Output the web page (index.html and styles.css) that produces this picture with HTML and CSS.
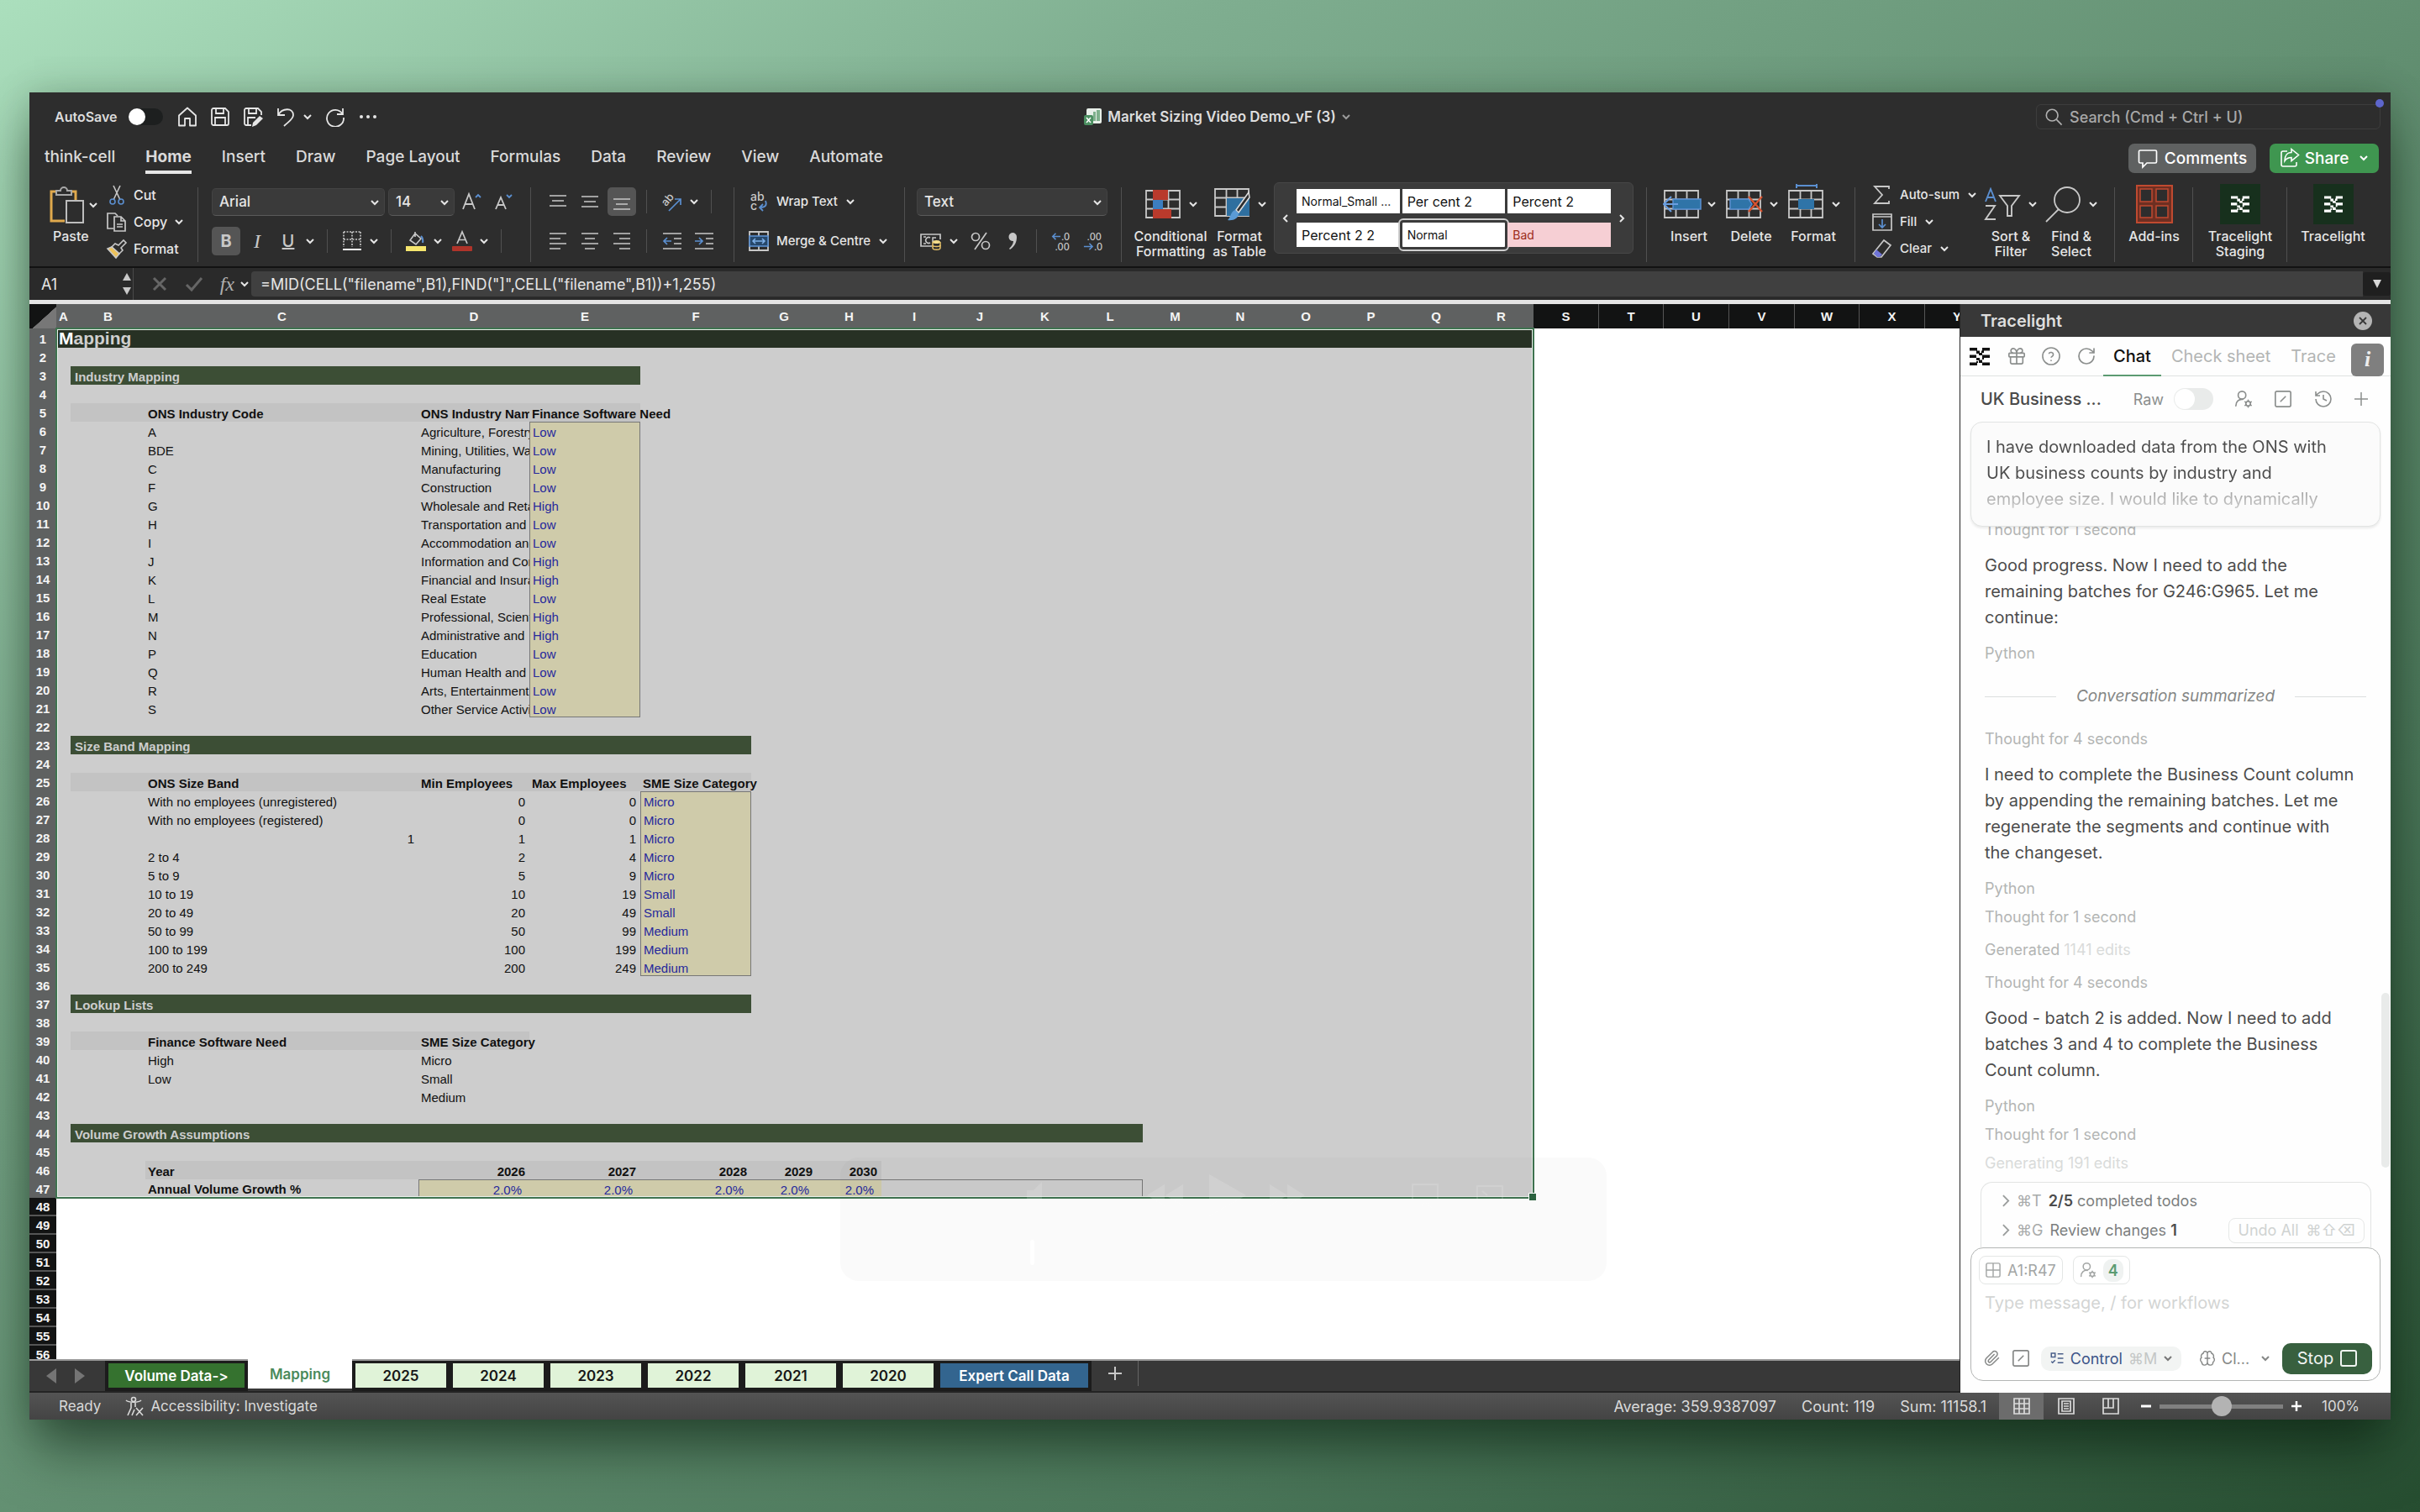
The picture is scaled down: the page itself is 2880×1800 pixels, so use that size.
FILE: index.html
```html
<!DOCTYPE html>
<html lang="en">
<head>
<meta charset="utf-8">
<title>Market Sizing Video Demo_vF (3)</title>
<link rel="stylesheet" href="styles.css">
</head>
<body>
<svg class="sprite" aria-hidden="true">
  <symbol id="chev" viewBox="0 0 12 12"><path d="M2 4l4 4 4-4" fill="none" stroke="currentColor" stroke-width="2"/></symbol>
  <symbol id="home" viewBox="0 0 24 24"><path d="M2 10.500L12 1.500l10 9V22.500h-7V14H9v8.500H2z" fill="none" stroke="currentColor" stroke-width="1.800" stroke-linejoin="round"/></symbol>
  <symbol id="save" viewBox="0 0 24 24"><path d="M2 4a2 2 0 0 1 2-2h14l4 4v14a2 2 0 0 1-2 2H4a2 2 0 0 1-2-2zM7 2v6h9V2M6 22v-9h12v9" fill="none" stroke="currentColor" stroke-width="1.800"/></symbol>
  <symbol id="saveas" viewBox="0 0 24 24"><path d="M10 22H4a2 2 0 0 1-2-2V4a2 2 0 0 1 2-2h14l4 4v4M7 2v6h9V2M6 22v-9h9" fill="none" stroke="currentColor" stroke-width="1.800"/><path d="M20 11l4 3-8 8-5 2 1-5z" fill="currentColor"/></symbol>
  <symbol id="undo" viewBox="0 0 24 24"><path d="M3 2v8h8M3 10C8 1 21 1 21 10c0 5-6 8-11 13" fill="none" stroke="currentColor" stroke-width="1.800"/></symbol>
  <symbol id="redo" viewBox="0 0 24 24"><path d="M21 2v7h-7M20.500 8.500A10 10 0 1 0 22 13" fill="none" stroke="currentColor" stroke-width="1.800"/></symbol>
  <symbol id="search" viewBox="0 0 24 24"><circle cx="10" cy="10" r="7.500" fill="none" stroke="currentColor" stroke-width="1.800"/><path d="M15.500 15.500l7 7" stroke="currentColor" stroke-width="1.800"/></symbol>
  <symbol id="grid-user" viewBox="0 0 24 24"><g fill="none" stroke="currentColor" stroke-width="1.800" stroke-linecap="round"><circle cx="10" cy="7" r="5"/><path d="M2 21c0-6 4-9 9-8.500"/><circle cx="18" cy="18" r="3"/><path d="M18 13.500v1.500M18 21v1.500M14 15.700l1.400.8M20.600 19.500l1.400.8M14 20.300l1.400-.8M20.600 16.500l1.400-.8"/></g></symbol>
  <symbol id="slash" viewBox="0 0 24 24"><g fill="none" stroke="currentColor" stroke-width="1.800" stroke-linecap="round"><rect x="2" y="2" width="20" height="20" rx="2"/><path d="M9 15l6-6"/></g></symbol>
  <symbol id="rotate" viewBox="0 0 24 24"><path d="M21 12a9 9 0 1 1-9-9c2.520 0 4.930 1 6.740 2.740L21 8M21 3v5h-5" fill="none" stroke="currentColor" stroke-width="1.700" stroke-linecap="round"/></symbol>
  <symbol id="logo" viewBox="0 0 24 21"><path d="M0 0h9v3.500H0zM15 0h9v3.500h-9zM8 3.500h4V7H8zM14 3.500h3V6h-3zM11 6h4v3h-4zM0 8.500h8V12H0zM15 8.500h9V12h-9zM8 12h4v3H8zM15 12h2v2h-2zM11 14.500h4V18h-4zM0 17.500h9V21H0zM15 17.500h9V21h-9zM8 16h2v2H8z" fill="currentColor"/></symbol>
  <symbol id="gridbase" viewBox="0 0 44 36"><path d="M2 2h40v32H2zM2 12.500h40M2 23.500h40M15.500 2v32M28.500 2v32" fill="none" stroke="#c8c8c8" stroke-width="1.800"/></symbol>
</svg>

<main class="window">
  <header class="titlebar">
    <div class="quick">
      <label class="autosave">AutoSave <input type="checkbox" class="switch switch-dark"></label>
      <button class="tb" aria-label="Home"><svg class="i24"><use href="#home"/></svg></button>
      <button class="tb" aria-label="Save"><svg class="i24"><use href="#save"/></svg></button>
      <button class="tb" aria-label="Save as"><svg class="i24"><use href="#saveas"/></svg></button>
      <button class="tb undo" aria-label="Undo"><svg class="i24"><use href="#undo"/></svg><svg class="chev"><use href="#chev"/></svg></button>
      <button class="tb" aria-label="Redo"><svg class="i24"><use href="#redo"/></svg></button>
      <button class="tb" aria-label="More"><svg class="i24" viewBox="0 0 24 24" fill="currentColor"><circle cx="4" cy="12" r="2"/><circle cx="12" cy="12" r="2"/><circle cx="20" cy="12" r="2"/></svg></button>
    </div>
    <div class="doc">
      <svg class="docicon" viewBox="0 0 22 22"><rect x="3" y="1" width="18" height="18" rx="2" fill="#e8efe9"/><path d="M11 5h3v11h-3zM15 3h4v13h-4z" fill="#7fb08c"/><rect x="0" y="9" width="11" height="12" rx="2" fill="#4b8f61"/><path d="M3 12l5 6M8 12l-5 6" stroke="#fff" stroke-width="1.500"/></svg>
      <span>Market Sizing Video Demo_vF (3)</span><svg class="chev dim"><use href="#chev"/></svg>
    </div>
    <label class="search"><svg class="i22"><use href="#search"/></svg><input type="text" placeholder="Search (Cmd + Ctrl + U)" aria-label="Search"><i class="bluedot"></i></label>
  </header>

  <nav class="tabs">
    <a href="#">think-cell</a><a href="#" class="on">Home</a><a href="#">Insert</a><a href="#">Draw</a><a href="#">Page Layout</a><a href="#">Formulas</a><a href="#">Data</a><a href="#">Review</a><a href="#">View</a><a href="#">Automate</a>
    <div class="tabs-right">
      <button class="comments"><svg class="i24" viewBox="0 0 24 24"><path d="M3 3h18a1.500 1.500 0 0 1 1.500 1.500v12A1.500 1.500 0 0 1 21 18H11l-5 5v-5H3a1.500 1.500 0 0 1-1.500-1.500v-12A1.500 1.500 0 0 1 3 3z" fill="none" stroke="currentColor" stroke-width="1.700"/></svg>Comments</button>
      <button class="share"><svg class="i24" viewBox="0 0 24 24"><path d="M9 4H4a2 2 0 0 0-2 2v14a2 2 0 0 0 2 2h14a2 2 0 0 0 2-2v-3M14 1.500l8.500 7-8.500 7v-4c-4 0-6 1-8 4 0-6 3-10 8-10z" fill="none" stroke="currentColor" stroke-width="1.600"/></svg>Share<svg class="chev"><use href="#chev"/></svg></button>
    </div>
  </nav>

  <section class="ribbon">
    <div class="group g-clip">
      <button class="paste"><span class="pic"><svg width="42" height="44" viewBox="0 0 42 44"><path d="M9 6H2v35h16" fill="none" stroke="#e0a94d" stroke-width="3"/><path d="M24 6h7v10" fill="none" stroke="#e0a94d" stroke-width="3"/><path d="M8 10V5h5a4 4 0 0 1 8 0h5v5z" fill="#2d2d2d" stroke="#a8a8a8" stroke-width="2"/><rect x="20" y="17" width="20" height="26" fill="#2d2d2d" stroke="#bdbdbd" stroke-width="2"/></svg><svg class="chev"><use href="#chev"/></svg></span>Paste</button>
      <div class="stack">
        <button><svg class="i24" viewBox="0 0 24 24" fill="none" stroke-width="1.600"><path d="M8 1l8 17M16 1L8 18" stroke="#c8c8c8"/><circle cx="7" cy="20" r="3" stroke="#5b8fd0"/><circle cx="17" cy="20" r="3" stroke="#5b8fd0"/></svg>Cut</button>
        <button><svg class="i24" viewBox="0 0 24 24" fill="none" stroke="#c8c8c8" stroke-width="1.700"><path d="M8 20H1V2h9l3 3"/><path d="M9 6h8l5 5v12H9zM17 6v5h5M12 15h7M12 18h7"/></svg>Copy<svg class="chev"><use href="#chev"/></svg></button>
        <button><svg class="i24" viewBox="0 0 24 24" stroke-width="1.600"><path d="M14 8l6-6 3 3-6 6 2 3-4 4-9-8 4-4z" fill="none" stroke="#c8c8c8"/><path d="M6 10l9 8-4 5L1 12z" fill="#edc25a" stroke="#c8c8c8"/></svg>Format</button>
      </div>
    </div>

    <div class="group rows g-font">
      <div class="row">
        <span class="sel w205"><select aria-label="Font"><option>Arial</option></select><svg class="chev"><use href="#chev"/></svg></span>
        <span class="sel w78"><select aria-label="Font size"><option>14</option></select><svg class="chev"><use href="#chev"/></svg></span>
        <button class="gl" aria-label="Grow font"><svg width="24" height="24" viewBox="0 0 24 24" fill="none"><path d="M1 21L8 3l7 18M3.500 15h9" stroke="#c8c8c8" stroke-width="1.800"/><path d="M16 7l3-3 3 3" stroke="#5b8fd0" stroke-width="1.800"/></svg></button>
        <button class="gl" aria-label="Shrink font"><svg width="24" height="24" viewBox="0 0 24 24" fill="none"><path d="M3 21L9 7l6 14M5 16h8" stroke="#c8c8c8" stroke-width="1.800"/><path d="M16 4l3 3 3-3" stroke="#5b8fd0" stroke-width="1.800"/></svg></button>
      </div>
      <div class="row tight">
        <button class="sq on"><b>B</b></button><button class="sq"><i class="serif">I</i></button><button class="sq"><u>U</u></button><svg class="chev"><use href="#chev"/></svg>
        <i class="sep"></i>
        <svg class="i24" viewBox="0 0 24 24" fill="none" stroke="#c8c8c8"><path d="M2 1v18M12 1v18M22 1v18M2 1h20M2 10h20" stroke-width="1.600" stroke-dasharray="2 1.500"/><path d="M1 22h22" stroke="#fff" stroke-width="2"/></svg><svg class="chev"><use href="#chev"/></svg>
        <i class="sep"></i>
        <svg class="i24" viewBox="0 0 24 24" fill="none"><path d="M11 1v6M11 3L5 11l7 5 6-7z" stroke="#c8c8c8" stroke-width="1.600"/><path d="M18 6q3 3 2 8" stroke="#5b8fd0" stroke-width="2"/><rect x="0" y="18" width="24" height="6" fill="#f6e66e"/></svg><svg class="chev"><use href="#chev"/></svg>
        <svg class="i24" viewBox="0 0 24 24" fill="none"><path d="M6 15l6-14 6 14M8 10.500h8" stroke="#c8c8c8" stroke-width="1.700"/><rect x="0" y="18" width="24" height="6" rx="1" fill="#b0342a"/></svg><svg class="chev"><use href="#chev"/></svg>
        <i class="sep"></i>
      </div>
    </div>

    <div class="group rows g-align">
      <div class="row al">
        <button class="sq" aria-label="Top"><svg class="i22" viewBox="0 0 22 22" stroke="currentColor" stroke-width="1.700"><path d="M1 4h20M4 10h14M1 16h20"/></svg></button>
        <button class="sq" aria-label="Middle"><svg class="i22" viewBox="0 0 22 22" stroke="currentColor" stroke-width="1.700"><path d="M1 5h20M4 11h14M1 17h20"/></svg></button>
        <button class="sq on" aria-label="Bottom"><svg class="i22" viewBox="0 0 22 22" stroke="currentColor" stroke-width="1.700"><path d="M1 8h20M4 14h14M1 20h20"/></svg></button>
        <i class="sep"></i>
        <svg class="i24" viewBox="0 0 24 24" fill="none"><text x="0" y="14" font-size="13" fill="#c8c8c8" transform="rotate(-50 7 11)">ab</text><path d="M8 23L22 9M15 9h7v7" stroke="#5b8fd0" stroke-width="1.700"/></svg><svg class="chev"><use href="#chev"/></svg>
        <i class="sep"></i>
      </div>
      <div class="row al">
        <button class="sq" aria-label="Left"><svg class="i22" viewBox="0 0 22 22" stroke="currentColor" stroke-width="1.700"><path d="M1 2h20M1 8h13M1 14h20M1 20h13"/></svg></button>
        <button class="sq" aria-label="Centre"><svg class="i22" viewBox="0 0 22 22" stroke="currentColor" stroke-width="1.700"><path d="M1 2h20M5 8h12M1 14h20M5 20h12"/></svg></button>
        <button class="sq" aria-label="Right"><svg class="i22" viewBox="0 0 22 22" stroke="currentColor" stroke-width="1.700"><path d="M1 2h20M8 8h13M1 14h20M8 20h13"/></svg></button>
        <i class="sep"></i>
        <svg class="i24" viewBox="0 0 24 24" fill="none" stroke-width="1.700"><path d="M1 3h22M14 9h9M14 15h9M1 21h22" stroke="#c8c8c8"/><path d="M11 12H2M6 8l-4 4 4 4" stroke="#5b8fd0"/></svg>
        <svg class="i24 ml" viewBox="0 0 24 24" fill="none" stroke-width="1.700"><path d="M1 3h22M14 9h9M14 15h9M1 21h22" stroke="#c8c8c8"/><path d="M1 12h9M6 8l4 4-4 4" stroke="#5b8fd0"/></svg>
      </div>
    </div>

    <div class="group rows g-wrap">
      <button class="row txt"><svg class="i24" viewBox="0 0 24 24" fill="none"><text x="2" y="11" font-size="14" fill="#c8c8c8">ab</text><text x="2" y="22" font-size="14" fill="#c8c8c8">c</text><path d="M20 11c2 5 0 8-6 8M17 15l-4 4 4 4" stroke="#5b8fd0" stroke-width="1.800"/></svg>Wrap Text<svg class="chev"><use href="#chev"/></svg></button>
      <button class="row txt"><svg class="i24" viewBox="0 0 24 24" fill="none"><path d="M1 1h22v22H1zM12 1v5M12 18v5" stroke="#c8c8c8" stroke-width="1.800"/><rect x="1" y="6" width="22" height="12" fill="#27486b" stroke="#5b8fd0" stroke-width="1.600"/><path d="M5 12h14M8 9l-3 3 3 3M16 9l3 3-3 3" stroke="#7fb0e8" stroke-width="1.500"/></svg>Merge &amp; Centre<svg class="chev"><use href="#chev"/></svg></button>
    </div>

    <div class="group rows g-num">
      <div class="row"><span class="sel w226"><select aria-label="Number format"><option>Text</option></select><svg class="chev"><use href="#chev"/></svg></span></div>
      <div class="row num">
        <svg class="i26" viewBox="0 0 26 24" fill="none"><path d="M14 18H1V4h23v6M4 7h3M4 15h3" stroke="#c8c8c8" stroke-width="1.700"/><path d="M12 8a3.500 3.500 0 1 0 0 6M19 8h-4v5" stroke="#c8c8c8" stroke-width="1.500"/><path d="M15 13v7c0 3 9 3 9 0v-7" fill="#2d2d2d" stroke="#e9c46a" stroke-width="1.500"/><ellipse cx="19.500" cy="13" rx="4.500" ry="2" fill="#f4dc8a"/><path d="M15 17c0 2 9 2 9 0" stroke="#e9c46a" stroke-width="1.500"/></svg><svg class="chev"><use href="#chev"/></svg>
        <svg class="i24 pctic" viewBox="0 0 24 24" fill="none" stroke="#c8c8c8" stroke-width="1.700"><circle cx="6" cy="7" r="4.500"/><circle cx="18" cy="17" r="4.500"/><path d="M19 2L5 22"/></svg>
        <svg class="i24" viewBox="0 0 24 24"><path d="M11 2a5 5 0 0 1 5 5c0 6-2 11-8 15l-1-1c3-3 5-6 5-9a5 5 0 1 1-1-10z" fill="#c8c8c8"/></svg>
        <i class="sep"></i>
        <svg class="i24" viewBox="0 0 24 26"><text x="13" y="12" font-size="12" fill="#c8c8c8">.0</text><text x="5" y="25" font-size="12" fill="#c8c8c8">.00</text><path d="M12 7H2M6 3L2 7l4 4" fill="none" stroke="#5b8fd0" stroke-width="1.700"/></svg>
        <svg class="i24" viewBox="0 0 24 26"><text x="4" y="12" font-size="12" fill="#c8c8c8">.00</text><text x="13" y="25" font-size="12" fill="#c8c8c8">.0</text><path d="M0 20h11M7 16l4 4-4 4" fill="none" stroke="#5b8fd0" stroke-width="1.700"/></svg>
      </div>
    </div>

    <div class="group g-style">
      <button class="big w82"><span class="pic"><svg width="44" height="36" viewBox="0 0 44 36"><use href="#gridbase"/><path d="M10 1h18v12H10zM10 24h22v11H10z" fill="#b93a2c"/><path d="M10 13h12v11H10z" fill="#3c7ec0"/></svg><svg class="chev"><use href="#chev"/></svg></span>Conditional<br>Formatting</button>
      <button class="big w82"><span class="pic"><svg width="44" height="40" viewBox="0 0 44 40"><use href="#gridbase" height="36"/><path d="M16 13h27v21H16z" fill="#2f6f9f"/><path d="M42 6L27 27l3 3L43 12z" fill="#2d2d2d" stroke="#ddd" stroke-width="1.500"/><path d="M26 27l4 4c0 6-6 9-13 8 4-3 3-10 9-12z" fill="#5b9bd5"/></svg><svg class="chev"><use href="#chev"/></svg></span>Format<br>as Table</button>
      <div class="gallery">
        <button class="arrow" aria-label="Previous styles"><svg class="chev left"><use href="#chev"/></svg></button>
        <div class="cells">
          <button class="small">Normal_Small ...</button><button>Per cent 2</button><button>Percent 2</button>
          <button>Percent 2 2</button><button class="small picked">Normal</button><button class="bad small">Bad</button>
        </div>
        <button class="arrow" aria-label="Next styles"><svg class="chev right"><use href="#chev"/></svg></button>
      </div>
    </div>

    <div class="group g-cells">
      <button class="big w66"><span class="pic"><svg width="46" height="36" viewBox="0 0 46 36"><use href="#gridbase" width="44"/><path d="M12 12h33v12H12z" fill="#2f74a8" stroke="#5b8fd0" stroke-width="1.500"/><path d="M18 18H1M10 9l-9 9 9 9" fill="none" stroke="#6a9ee0" stroke-width="2"/></svg><svg class="chev"><use href="#chev"/></svg></span>Insert</button>
      <button class="big w66"><span class="pic"><svg width="46" height="36" viewBox="0 0 46 36"><use href="#gridbase" width="44"/><path d="M6 12h22l4 6-4 6H6z" fill="#2f74a8" stroke="#5b8fd0" stroke-width="1.500"/><path d="M28 9l16 18M44 9L28 27" fill="none" stroke="#d8532f" stroke-width="2.200"/></svg><svg class="chev"><use href="#chev"/></svg></span>Delete</button>
      <button class="big w66"><span class="pic"><svg width="46" height="48" viewBox="0 0 46 48"><svg y="6" width="44" height="36"><use href="#gridbase"/></svg><path d="M13 18h19v12H13z" fill="#2f74a8"/><path d="M11 2h24M11 0v5M35 0v5" stroke="#5b8fd0" stroke-width="2"/></svg><svg class="chev"><use href="#chev"/></svg></span>Format</button>
    </div>

    <div class="group g-edit">
      <div class="stack">
        <button><svg class="i24" viewBox="0 0 24 24" fill="none" stroke="#c8c8c8" stroke-width="1.800"><path d="M20 5V2H3l9 10-9 10h17v-3"/></svg>Auto-sum<svg class="chev"><use href="#chev"/></svg></button>
        <button><svg class="i24" viewBox="0 0 24 24" fill="none"><path d="M1 3h22v19H1zM1 6h22" stroke="#c8c8c8" stroke-width="1.700"/><path d="M12 9v10M8 15l4 4 4-4" stroke="#5b8fd0" stroke-width="1.700"/></svg>Fill<svg class="chev"><use href="#chev"/></svg></button>
        <button><svg class="i24" viewBox="0 0 24 24" fill="none"><path d="M14 2l8 6-11 14H6l-5-4z" stroke="#c8c8c8" stroke-width="1.700"/><path d="M5 13l7 6-3 3H6l-4-4z" fill="#6f74d8"/></svg>Clear<svg class="chev"><use href="#chev"/></svg></button>
      </div>
      <button class="big w72"><span class="pic"><svg width="44" height="40" viewBox="0 0 44 40" fill="none" stroke-width="1.900"><path d="M2 17L8 2l6 15M4 12h8" stroke="#5b8fd0"/><path d="M2 22h11L2 38h12M19 10h23L33 22v12h-5V22z" stroke="#c8c8c8"/></svg><svg class="chev"><use href="#chev"/></svg></span>Sort &amp;<br>Filter</button>
      <button class="big w72"><span class="pic"><svg width="44" height="44" viewBox="0 0 44 44" fill="none" stroke="#c8c8c8" stroke-width="1.800"><circle cx="27" cy="17" r="15"/><path d="M17 28L2 43"/></svg><svg class="chev"><use href="#chev"/></svg></span>Find &amp;<br>Select</button>
    </div>

    <div class="group solo w93"><button class="big"><span class="pic"><svg width="44" height="46" viewBox="0 0 44 46" fill="#2d2d2d" stroke="#c04a30"><rect x="1" y="1" width="42" height="44" fill="#6e2f22" stroke-width="2"/><path d="M5 5h14v15H5zM24 5h14v15H24zM5 25h14v14H5zM24 25h14v14H24z" stroke-width="1.500"/></svg></span>Add-ins</button></div>
    <div class="group solo w112"><button class="big"><span class="pic"><span class="tile"><svg width="22" height="20"><use href="#logo"/></svg></span></span>Tracelight<br>Staging</button></div>
    <div class="group solo w123"><button class="big"><span class="pic"><span class="tile"><svg width="22" height="20"><use href="#logo"/></svg></span></span>Tracelight</button></div>
  </section>

  <section class="formula">
    <div class="namebox"><input value="A1" aria-label="Name box"><svg width="12" height="28" viewBox="0 0 12 28" fill="#c8c8c8"><path d="M6 1l5 9H1zM6 27l5-9H1z"/></svg></div>
    <div class="fx">
      <svg class="i22" viewBox="0 0 22 22" stroke="#666" stroke-width="3"><path d="M4 4l14 14M18 4L4 18"/></svg>
      <svg class="i22" viewBox="0 0 22 22" fill="none" stroke="#666" stroke-width="3"><path d="M2 12l6 6L20 4"/></svg>
      <span><i>fx</i><svg class="chev"><use href="#chev"/></svg></span>
    </div>
    <input class="fin" value="=MID(CELL(&quot;filename&quot;,B1),FIND(&quot;]&quot;,CELL(&quot;filename&quot;,B1))+1,255)" aria-label="Formula">
    <button class="fdrop" aria-label="Expand"><svg width="12" height="12" viewBox="0 0 12 12" fill="#d8d8d8"><path d="M1 1h10L6 11z"/></svg></button>
  </section>

  <section class="work">
    <div class="book">
      <div class="sheet">
        <table>
          <colgroup><col class="c-h"><col class="c-a"><col class="c-b"><col class="c-c"><col class="c-d"><col class="c-d"><col class="c-d"><col class="c78"><col class="c77"><col class="c78"><col class="c78"><col class="c77"><col class="c78"><col class="c77"><col class="c78"><col class="c78"><col class="c77"><col class="c78"><col class="c77"><col class="c78"><col class="c77"><col class="c78"><col class="c78"><col class="c77"><col class="c78"><col class="c77"></colgroup>
          <thead><tr><th class="corner"></th><th>A</th><th>B</th><th>C</th><th>D</th><th>E</th><th>F</th><th>G</th><th>H</th><th>I</th><th>J</th><th>K</th><th>L</th><th>M</th><th>N</th><th>O</th><th>P</th><th>Q</th><th>R</th><th class="off">S</th><th class="off">T</th><th class="off">U</th><th class="off">V</th><th class="off">W</th><th class="off">X</th><th class="off">Y</th></tr></thead>
          <tbody class="selected">
            <tr class="title"><th>1</th><td colspan="18"><span>M</span>apping</td></tr>
            <tr><th>2</th><td colspan="18"></td></tr>
            <tr><th>3</th><td></td><td colspan="4" class="banner">Industry Mapping</td><td colspan="13"></td></tr>
            <tr><th>4</th><td colspan="18"></td></tr>
            <tr class="h"><th>5</th><td></td><td class="hd"></td><td class="hd">ONS Industry Code</td><td class="hd clip">ONS Industry Name</td><td class="hd">Finance Software Need</td><td colspan="13"></td></tr>
            <tr><th>6</th><td colspan="2"></td><td>A</td><td class="clip">Agriculture, Forestry</td><td class="in top">Low</td><td colspan="13"></td></tr>
            <tr><th>7</th><td colspan="2"></td><td>BDE</td><td class="clip">Mining, Utilities, Waste</td><td class="in">Low</td><td colspan="13"></td></tr>
            <tr><th>8</th><td colspan="2"></td><td>C</td><td class="clip">Manufacturing</td><td class="in">Low</td><td colspan="13"></td></tr>
            <tr><th>9</th><td colspan="2"></td><td>F</td><td class="clip">Construction</td><td class="in">Low</td><td colspan="13"></td></tr>
            <tr><th>10</th><td colspan="2"></td><td>G</td><td class="clip">Wholesale and Retail</td><td class="in">High</td><td colspan="13"></td></tr>
            <tr><th>11</th><td colspan="2"></td><td>H</td><td class="clip">Transportation and</td><td class="in">Low</td><td colspan="13"></td></tr>
            <tr><th>12</th><td colspan="2"></td><td>I</td><td class="clip">Accommodation and</td><td class="in">Low</td><td colspan="13"></td></tr>
            <tr><th>13</th><td colspan="2"></td><td>J</td><td class="clip">Information and Comms</td><td class="in">High</td><td colspan="13"></td></tr>
            <tr><th>14</th><td colspan="2"></td><td>K</td><td class="clip">Financial and Insurance</td><td class="in">High</td><td colspan="13"></td></tr>
            <tr><th>15</th><td colspan="2"></td><td>L</td><td class="clip">Real Estate</td><td class="in">Low</td><td colspan="13"></td></tr>
            <tr><th>16</th><td colspan="2"></td><td>M</td><td class="clip">Professional, Scientific</td><td class="in">High</td><td colspan="13"></td></tr>
            <tr><th>17</th><td colspan="2"></td><td>N</td><td class="clip">Administrative and</td><td class="in">High</td><td colspan="13"></td></tr>
            <tr><th>18</th><td colspan="2"></td><td>P</td><td class="clip">Education</td><td class="in">Low</td><td colspan="13"></td></tr>
            <tr><th>19</th><td colspan="2"></td><td>Q</td><td class="clip">Human Health and</td><td class="in">Low</td><td colspan="13"></td></tr>
            <tr><th>20</th><td colspan="2"></td><td>R</td><td class="clip">Arts, Entertainment</td><td class="in">Low</td><td colspan="13"></td></tr>
            <tr><th>21</th><td colspan="2"></td><td>S</td><td class="clip">Other Service Activities</td><td class="in bot">Low</td><td colspan="13"></td></tr>
            <tr><th>22</th><td colspan="18"></td></tr>
            <tr><th>23</th><td></td><td colspan="5" class="banner">Size Band Mapping</td><td colspan="12"></td></tr>
            <tr><th>24</th><td colspan="18"></td></tr>
            <tr><th>25</th><td></td><td class="hd"></td><td class="hd">ONS Size Band</td><td class="hd">Min Employees</td><td class="hd">Max Employees</td><td class="hd">SME Size Category</td><td colspan="12"></td></tr>
            <tr><th>26</th><td colspan="2"></td><td>With no employees (unregistered)</td><td class="n">0</td><td class="n">0</td><td class="in top">Micro</td><td colspan="12"></td></tr>
            <tr><th>27</th><td colspan="2"></td><td>With no employees (registered)</td><td class="n">0</td><td class="n">0</td><td class="in">Micro</td><td colspan="12"></td></tr>
            <tr><th>28</th><td colspan="2"></td><td class="n">1</td><td class="n">1</td><td class="n">1</td><td class="in">Micro</td><td colspan="12"></td></tr>
            <tr><th>29</th><td colspan="2"></td><td>2 to 4</td><td class="n">2</td><td class="n">4</td><td class="in">Micro</td><td colspan="12"></td></tr>
            <tr><th>30</th><td colspan="2"></td><td>5 to 9</td><td class="n">5</td><td class="n">9</td><td class="in">Micro</td><td colspan="12"></td></tr>
            <tr><th>31</th><td colspan="2"></td><td>10 to 19</td><td class="n">10</td><td class="n">19</td><td class="in">Small</td><td colspan="12"></td></tr>
            <tr><th>32</th><td colspan="2"></td><td>20 to 49</td><td class="n">20</td><td class="n">49</td><td class="in">Small</td><td colspan="12"></td></tr>
            <tr><th>33</th><td colspan="2"></td><td>50 to 99</td><td class="n">50</td><td class="n">99</td><td class="in">Medium</td><td colspan="12"></td></tr>
            <tr><th>34</th><td colspan="2"></td><td>100 to 199</td><td class="n">100</td><td class="n">199</td><td class="in">Medium</td><td colspan="12"></td></tr>
            <tr><th>35</th><td colspan="2"></td><td>200 to 249</td><td class="n">200</td><td class="n">249</td><td class="in bot">Medium</td><td colspan="12"></td></tr>
            <tr><th>36</th><td colspan="18"></td></tr>
            <tr><th>37</th><td></td><td colspan="5" class="banner">Lookup Lists</td><td colspan="12"></td></tr>
            <tr><th>38</th><td colspan="18"></td></tr>
            <tr><th>39</th><td></td><td class="hd"></td><td class="hd">Finance Software Need</td><td class="hd">SME Size Category</td><td colspan="14"></td></tr>
            <tr><th>40</th><td colspan="2"></td><td>High</td><td>Micro</td><td colspan="14"></td></tr>
            <tr><th>41</th><td colspan="2"></td><td>Low</td><td>Small</td><td colspan="14"></td></tr>
            <tr><th>42</th><td colspan="2"></td><td></td><td>Medium</td><td colspan="14"></td></tr>
            <tr><th>43</th><td colspan="18"></td></tr>
            <tr><th>44</th><td></td><td colspan="11" class="banner">Volume Growth Assumptions</td><td colspan="6"></td></tr>
            <tr><th>45</th><td colspan="18"></td></tr>
            <tr><th>46</th><td colspan="2"></td><td class="hd">Year</td><td class="hd n">2026</td><td class="hd n">2027</td><td class="hd n">2028</td><td class="hd n">2029</td><td class="hd n">2030</td><td colspan="10"></td></tr>
            <tr class="last"><th>47</th><td colspan="2"></td><td class="b">Annual Volume Growth %</td><td class="pc first">2.0%</td><td class="pc">2.0%</td><td class="pc">2.0%</td><td class="pc">2.0%</td><td class="pc">2.0%</td><td colspan="4" class="rest"></td><td colspan="6"></td></tr>
          </tbody>
          <tbody class="free">
            <tr><th>48</th></tr><tr><th>49</th></tr><tr><th>50</th></tr><tr><th>51</th></tr><tr><th>52</th></tr><tr><th>53</th></tr><tr><th>54</th></tr><tr><th>55</th></tr><tr><th>56</th></tr>
          </tbody>
        </table>
        <div class="marquee"></div>
        <div class="player">
          <div class="pctl">
            <svg width="34" height="40" viewBox="0 0 34 40"><path d="M2 14h8l10-10v32L10 26H2z"/></svg>
            <svg class="rw" width="44" height="26" viewBox="0 0 44 26"><path d="M21 0v26L0 13zM43 0v26L22 13z"/></svg>
            <svg width="48" height="50" viewBox="0 0 48 50"><path d="M4 0l44 25L4 50z"/></svg>
            <svg width="44" height="26" viewBox="0 0 44 26"><path d="M1 0v26l21-13zM22 0v26l21-13z"/></svg>
            <svg class="cast" width="34" height="30" viewBox="0 0 34 30" fill="none" stroke="#fff" stroke-width="2"><path d="M2 2h30v20H2zM17 22l6 7H11z"/></svg>
            <svg class="pip" width="34" height="26" viewBox="0 0 34 26" fill="none" stroke="#fff" stroke-width="2"><path d="M2 2h30v22H2zM8 8l6 5"/></svg>
          </div>
          <i class="scrub"></i>
        </div>
      </div>
      <div class="sheets">
        <span class="nav"><svg width="12" height="18" viewBox="0 0 12 18"><path d="M12 0v18L0 9z"/></svg><svg width="12" height="18" viewBox="0 0 12 18"><path d="M0 0v18l12-9z"/></svg></span>
        <button class="st green">Volume Data-&gt;</button><button class="st cur">Mapping</button><button class="st yr">2025</button><button class="st yr">2024</button><button class="st yr">2023</button><button class="st yr">2022</button><button class="st yr">2021</button><button class="st yr">2020</button><button class="st blue">Expert Call Data</button>
        <button class="add" aria-label="Add sheet"><svg width="16" height="16" viewBox="0 0 16 16" stroke="#c8c8c8" stroke-width="2"><path d="M8 0v16M0 8h16"/></svg></button>
      </div>
    </div>

    <aside class="panel">
      <h2>Tracelight<button aria-label="Close"><svg width="22" height="22" viewBox="0 0 22 22"><circle cx="11" cy="11" r="11" fill="#b4b4b4"/><path d="M7 7l8 8M15 7l-8 8" stroke="#383838" stroke-width="1.800"/></svg></button></h2>
      <nav class="ptabs">
        <svg class="plogo" width="24" height="21"><use href="#logo"/></svg>
        <svg class="i22" viewBox="0 0 24 24" fill="none" stroke="currentColor" stroke-width="1.800"><rect x="2" y="8" width="20" height="5" rx="1"/><path d="M12 8v14M20 13v7a2 2 0 0 1-2 2H6a2 2 0 0 1-2-2v-7M7.500 8a2.500 2.500 0 0 1 0-6C10 2 12 5 12 8c0-3 2-6 4.500-6a2.500 2.500 0 0 1 0 6"/></svg>
        <svg class="i22" viewBox="0 0 24 24" fill="none" stroke="currentColor" stroke-width="1.700"><circle cx="12" cy="12" r="11"/><path d="M9 9a3 3 0 0 1 5.800 1c0 2-2.800 2.600-2.800 4M12 17v1.500"/></svg>
        <svg class="i24"><use href="#rotate"/></svg>
        <a href="#" class="on">Chat</a><a href="#">Check sheet</a><a href="#">Trace</a>
        <button class="info"><i>i</i></button>
      </nav>
      <div class="phead">
        <strong>UK Business ...</strong>
        <label>Raw <input type="checkbox" class="switch switch-light"></label>
        <button aria-label="Agents"><svg class="i22"><use href="#grid-user"/></svg></button>
        <button aria-label="Commands"><svg class="i22"><use href="#slash"/></svg></button>
        <button aria-label="History"><svg class="i24" viewBox="0 0 24 24"><path d="M3 12a9 9 0 1 0 9-9 9.750 9.750 0 0 0-6.740 2.740L3 8M3 3v5h5M12 7v5l4 2" fill="none" stroke="currentColor" stroke-width="1.600"/></svg></button>
        <button aria-label="New"><svg class="i16" viewBox="0 0 16 16"><path d="M8 0v16M0 8h16" stroke="currentColor" stroke-width="1.500"/></svg></button>
      </div>
      <div class="ask"><p>I have downloaded data from the ONS with UK business counts by industry and employee size. I would like to dynamically</p></div>
      <div class="chat">
        <p class="meta">Thought for 1 second</p>
        <p class="msg">Good progress. Now I need to add the remaining batches for G246:G965. Let me continue:</p>
        <p class="meta">Python</p>
        <p class="cut"><span>Conversation summarized</span></p>
        <p class="meta">Thought for 4 seconds</p>
        <p class="msg">I need to complete the Business Count column by appending the remaining batches. Let me regenerate the segments and continue with the changeset.</p>
        <p class="meta">Python</p>
        <p class="meta">Thought for 1 second</p>
        <p class="meta gen">Generated <span>1141 edits</span></p>
        <p class="meta">Thought for 4 seconds</p>
        <p class="msg">Good - batch 2 is added. Now I need to add batches 3 and 4 to complete the Business Count column.</p>
        <p class="meta">Python</p>
        <p class="meta">Thought for 1 second</p>
        <p class="meta faint">Generating 191 edits</p>
        <i class="thumb"></i>
      </div>
      <div class="todo">
        <div><svg class="arrowr" viewBox="0 0 10 16"><path d="M1 1l7 7-7 7"/></svg><kbd>⌘T</kbd><span><b>2/5</b> completed todos</span></div>
        <div><svg class="arrowr" viewBox="0 0 10 16"><path d="M1 1l7 7-7 7"/></svg><kbd>⌘G</kbd><span>Review changes <b>1</b></span><button>Undo All <kbd>⌘⇧⌫</kbd></button></div>
      </div>
      <div class="composer">
        <div class="chips">
          <span class="chip"><svg class="i18" viewBox="0 0 20 20" fill="none" stroke="currentColor" stroke-width="1.600"><rect x="1" y="1" width="18" height="18" rx="2"/><path d="M1 10h18M10 1v18"/></svg>A1:R47</span>
          <span class="chip"><svg class="i20"><use href="#grid-user"/></svg><em>4</em></span>
        </div>
        <textarea placeholder="Type message, / for workflows" aria-label="Message"></textarea>
        <div class="actions">
          <button aria-label="Attach"><svg class="i20" viewBox="0 0 24 24"><path d="M21.400 11l-9.200 9.200a6 6 0 0 1-8.500-8.500l8.600-8.500A4 4 0 1 1 18 8.800l-8.600 8.600a2 2 0 0 1-2.800-2.800l8.500-8.500" fill="none" stroke="currentColor" stroke-width="1.800"/></svg></button>
          <button aria-label="Commands"><svg class="i22"><use href="#slash"/></svg></button>
          <button class="control"><svg class="i18" viewBox="0 0 24 24" fill="none" stroke="#4a5f8a" stroke-width="2"><rect x="3" y="4" width="6" height="6"/><path d="M3 17l2 2 4-4M13 5h9M13 12h9M13 19h9"/></svg>Control <kbd>⌘M</kbd><svg class="chev thin"><use href="#chev"/></svg></button>
          <button class="model"><svg class="i20" viewBox="0 0 24 24" fill="none" stroke="currentColor" stroke-width="1.700"><path d="M12 5a3 3 0 1 0-6 .1 4 4 0 0 0-2.500 5.800 4 4 0 0 0 .5 6.600A4 4 0 1 0 12 18zM12 5a3 3 0 1 1 6 .1 4 4 0 0 1 2.500 5.800 4 4 0 0 1-.5 6.600A4 4 0 1 1 12 18zM8 12h8"/></svg>Cl...<svg class="chev thin"><use href="#chev"/></svg></button>
          <button class="stop">Stop <i></i></button>
        </div>
      </div>
    </aside>
  </section>

  <footer class="status">
    <span>Ready</span>
    <svg class="i24" viewBox="0 0 24 24" fill="none" stroke="currentColor" stroke-width="1.600"><circle cx="11" cy="4" r="2.500"/><path d="M2 5c3 3 15 3 18 0M8 8v6l-4 9M13 8v5M9 23l3-7M14 14l8 9M22 14l-8 9"/></svg>
    <span class="acc">Accessibility: Investigate</span>
    <div class="stats"><span>Average: 359.9387097</span><span>Count: 119</span><span>Sum: 11158.1</span></div>
    <button class="view on" aria-label="Normal"><svg class="i20" viewBox="0 0 20 20" fill="none" stroke="currentColor" stroke-width="1.700"><path d="M1 1h18v18H1zM7 1v18M13 1v18M1 7h18M1 13h18"/></svg></button>
    <button class="view" aria-label="Page layout"><svg class="i20" viewBox="0 0 20 20" fill="none" stroke="currentColor" stroke-width="1.700"><path d="M1 1h18v18H1zM5 4h10v12H5zM7 7h6M7 10h6M7 13h6"/></svg></button>
    <button class="view" aria-label="Page break"><svg class="i20" viewBox="0 0 20 20" fill="none" stroke="currentColor" stroke-width="1.700"><path d="M1 1h18v18H1zM1 12h12V1M7 1v11"/></svg></button>
    <span class="zoom"><button aria-label="Zoom out"><svg width="12" height="12" viewBox="0 0 12 12"><path d="M0 6h12" stroke="#fff" stroke-width="3"/></svg></button><input type="range" value="50" aria-label="Zoom"><button aria-label="Zoom in"><svg width="12" height="12" viewBox="0 0 12 12"><path d="M0 6h12M6 0v12" stroke="#fff" stroke-width="2.500"/></svg></button></span>
    <span class="pct">100%</span>
  </footer>
</main>
</body>
</html>
```
FILE: styles.css
```css
* { box-sizing: border-box; }
html { height: 100%; }
body {
  margin: 0;
  height: 100vh;
  padding: 110px 35px;
  display: flex;
  background: linear-gradient(to bottom right, #abdfbd 0%, #7fae90 25%, #639072 50%, #4a7659 75%, #264d30 100%);
  font-family: Inter, "Liberation Sans", sans-serif;
  font-size: 16px;
  color: #e6e6e6;
}
button, input, select, textarea { font: inherit; color: inherit; background: none; border: 0; padding: 0; margin: 0; outline: 0; }
button { display: flex; align-items: center; justify-content: center; white-space: nowrap; }
a { color: inherit; text-decoration: none; }
p, h2 { margin: 0; }
svg { display: block; flex: none; }
kbd { font: inherit; font-family: Inter, "DejaVu Sans", sans-serif; }
.sprite { position: absolute; width: 0; height: 0; }
.chev { width: 12px; height: 12px; }
.chev.left { transform: rotate(90deg); }
.chev.right { transform: rotate(-90deg); }
.i16 { width: 16px; height: 16px; }
.i18 { width: 18px; height: 18px; }
.i20 { width: 20px; height: 20px; }
.i22 { width: 22px; height: 22px; }
.i24 { width: 24px; height: 24px; overflow: visible; }
.i26 { width: 26px; height: 24px; }

.window {
  flex: 1;
  min-width: 0;
  display: flex;
  flex-direction: column;
  background: #2d2d2d;
  box-shadow: 0 40px 60px -6px rgba(0, 20, 5, .5), 0 0 40px rgba(0, 30, 10, .2);
}

/* title bar */
.titlebar { height: 58px; flex: none; display: grid; grid-template-columns: 1fr auto 1fr; align-items: center; padding: 0 12px 0 30px; }
.quick { display: flex; align-items: center; gap: 15px; }
.autosave { display: flex; align-items: center; gap: 13px; margin-right: 2px; font-weight: 600; font-size: 16px; color: #dcdcdc; }
.switch { appearance: none; display: block; border-radius: 13px; }
.switch::before { content: ""; display: block; border-radius: 50%; background: #fff; }
.switch-dark { width: 41px; height: 20px; background: #1d1f1f; }
.switch-dark::before { width: 20px; height: 20px; }
.switch-light { width: 47px; height: 26px; background: #e9ebea; padding: 1px; }
.switch-light::before { width: 24px; height: 24px; }
.undo { gap: 8px; }
.doc { display: flex; align-items: center; gap: 6px; font-size: 17px; font-weight: 600; color: #dedede; }
.docicon { width: 22px; height: 22px; }
.dim { color: #9a9a9a; }
.search { justify-self: end; position: relative; width: 410px; height: 30px; display: flex; align-items: center; gap: 8px; padding-left: 9px; border: 1px solid #3d3d3d; border-radius: 6px; color: #b0b0b0; font-size: 18px; font-weight: 500; }
.search input { flex: 1; min-width: 0; }
.search input::placeholder { color: #a8a8a8; opacity: 1; }
.bluedot { position: absolute; right: -5px; top: -7px; width: 10px; height: 10px; border-radius: 50%; background: #5d66cc; }

/* tabs */
.tabs { height: 40px; flex: none; display: flex; align-items: center; gap: 36px; padding: 0 14px 0 18px; font-size: 19px; font-weight: 500; color: #dadada; }
.tabs a { height: 38px; line-height: 36px; }
.tabs .on { font-weight: 700; border-bottom: 4px solid #e6e6e6; }
.tabs-right { margin-left: auto; display: flex; gap: 16px; color: #fff; }
.comments, .share { height: 35px; border-radius: 7px; font-weight: 500; }
.comments { width: 152px; gap: 8px; background: #5f6161; }
.share { width: 130px; gap: 6px; background: #3f9650; }
.share .chev { margin-left: 6px; }

/* ribbon */
.ribbon { height: 109px; flex: none; display: flex; font-size: 16px; font-weight: 500; line-height: 18px; }
.group { flex: none; display: flex; position: relative; }
.group:not(:last-child)::after { content: ""; position: absolute; right: 0; top: 15px; bottom: 5px; width: 1px; background: #505050; }
.rows { flex-direction: column; gap: 13px; padding-top: 15px; }
.row { display: flex; align-items: center; justify-content: flex-start; height: 34px; }
.g-clip { width: 201px; padding-left: 24px; gap: 8px; }
.g-font { width: 396px; padding-left: 16px; }
.g-align { width: 242px; padding-left: 15px; }
.g-wrap { width: 203px; padding-left: 17px; }
.g-num { width: 258px; padding-left: 14px; }
.g-style { flex: 1; min-width: 0; padding-left: 17px; }
.g-cells { width: 248px; padding-left: 17px; gap: 8px; }
.g-edit { width: 309px; padding-left: 20px; }
.w93 { width: 93px; }
.w112 { width: 112px; }
.w123 { width: 123px; padding-right: 14px; }
.paste { flex-direction: column; justify-content: flex-start; align-items: flex-start; padding-top: 13px; width: 60px; line-height: 18px; text-indent: 4px; }
.paste .pic { display: flex; align-items: center; gap: 4px; height: 46px; margin-bottom: 5px; }
.stack { display: flex; flex-direction: column; padding-top: 8px; }
.stack button { height: 32px; justify-content: flex-start; gap: 8px; }
.g-edit .stack { width: 129px; }
.g-edit .stack, .txt { font-size: 15px; }
.g-edit .stack button { gap: 9px; }
.big { flex-direction: column; justify-content: flex-start; padding-top: 15px; text-align: center; line-height: 18px; }
.big .pic { display: flex; align-items: center; justify-content: center; gap: 8px; height: 40px; margin-bottom: 9px; }
.w82 { width: 82px; }
.w66 { width: 66px; }
.w72 { width: 72px; }
.g-cells .pic, .g-edit .pic, .g-style .w82 .pic { align-self: flex-start; }
.g-cells .pic { gap: 6px; padding-left: 2px; }
.g-edit .pic { padding-left: 4px; }
.solo .big { width: 100%; }
.tile { width: 48px; height: 48px; background: #17301d; display: grid; place-items: center; color: #fff; }
.sel { position: relative; height: 33px; margin-right: 4px; background: #3a3a3a; border: 1px solid #434343; border-bottom-color: #5a5a5a; border-radius: 5px; }
.sel select { appearance: none; width: 100%; height: 100%; padding-left: 8px; font-size: 17px; }
.sel .chev { position: absolute; right: 5px; top: 10px; pointer-events: none; }
.w205 { width: 206px; }
.w78 { width: 79px; }
.w226 { width: 227px; }
.gl { margin-left: 5px; margin-right: 8px; }
.sq { width: 34px; height: 34px; border-radius: 5px; font-size: 20px; color: #c8c8c8; }
.sq.on { background: #555; }
.serif { font-family: "Liberation Serif", serif; font-size: 24px; }
.tight .sq { margin-right: 3px; }
.tight .sep { margin: 0 17px 0 14px; }
.tight .chev + .i24 { margin-left: 11px; }
.tight .i24 + .chev { margin-left: 8px; }
.sep { width: 1px; height: 28px; background: #505050; flex: none; }
.al .sq { margin-right: 4px; width: 34px; }
.al .sep { margin: 0 18px 0 8px; }
.al .i24 + .chev { margin-left: 8px; }
.al .chev + .sep { margin-left: 14px; margin-right: 0; }
.ml { margin-left: 14px; }
.txt { gap: 9px; }
.num { padding-left: 4px; }
.num .chev { margin: 0 14px 0 8px; }
.num .i24 { margin-right: 15px; }
.num .sep { margin: 0 16px 0 0; }
.gallery { flex: 1; margin: 9px 16px 0 0; height: 85px; display: flex; background: #3b3b3b; border: 1px solid #474747; border-radius: 6px; padding: 7px 0; }
.g-style .w82 { margin-right: 0; flex: none; }
.g-style .w82 .pic { padding-left: 10px; }
.arrow { width: 26px; flex: none; }
.cells { flex: 1; display: grid; grid-template-columns: 1fr 1fr 1fr; grid-template-rows: 29px 29px; gap: 11px 3px; }
.cells button { background: #fff; color: #111; justify-content: flex-start; padding-left: 6px; font-size: 16px; font-weight: 400; }
.cells .small { font-size: 14px; }
.cells .picked { outline: 2px solid #cfcfcf; outline-offset: 3px; border-radius: 1px; }
.cells .bad { background: #f6cfd4; color: #9c2b17; }

/* formula bar */
.formula { height: 45px; flex: none; display: flex; align-items: center; border-top: 2px solid #121212; border-bottom: 5px solid #e4e4e4; background: #2a2a2a; font-size: 18px; }
.namebox { width: 124px; height: 38px; display: flex; align-items: center; justify-content: space-between; padding: 0 1px 0 14px; border-right: 1px solid #4a4a4a; }
.namebox input { width: 90px; }
.fx { width: 140px; display: flex; align-items: center; justify-content: space-between; padding: 0 2px 0 20px; }
.fx span { display: flex; align-items: center; gap: 6px; }
.fx i { font: italic 24px/28px "Liberation Serif", serif; color: #b0b0b0; }
.fin { flex: 1; min-width: 0; height: 30px; padding-left: 11px; background: #404040; border-radius: 4px 0 0 4px; }
.fdrop { width: 33px; height: 28px; background: #1f1f1f; border-radius: 3px; }

/* workspace */
.work { flex: 1; min-height: 0; display: grid; grid-template-columns: 1fr 513px; }
.book { min-width: 0; min-height: 0; display: flex; flex-direction: column; }
.sheet { flex: 1; min-height: 0; overflow: hidden; position: relative; background: #fff; }
table { table-layout: fixed; width: 2333px; border-collapse: separate; border-spacing: 0; font: 15px/18px "Liberation Sans", Arial, sans-serif; color: #111; }
.c-h { width: 32px; }
.c-a { width: 17px; }
.c-b { width: 89px; }
.c-c { width: 325px; }
.c-d { width: 132px; }
.c77 { width: 77px; }
.c78 { width: 78px; }
th { padding: 0; background: #5f6161; color: #f4f4f4; font-weight: 700; text-align: center; }
thead th { height: 29px; }
thead .off, .free th { background: #121313; }
thead .off { border-right: 1px solid #555; }
.free th { border-bottom: 2px solid #555; }
thead .corner { background: linear-gradient(to bottom right, #121313 55%, #777 56%); }
tbody tr { height: 22px; }
tbody th { padding-top: 2px; }
td { height: 22px; padding: 4px 5px 0 3px; white-space: nowrap; background: #cdcdcd; }
tbody .title, .title td { height: 23px; }
.title td { padding-top: 0; background: #273124; color: #cfcfcf; font-size: 21px; font-weight: 700; line-height: 22px; }
.title span { color: #fff; }
.last td { padding-top: 2px; }
.selected .banner { background: #3c4e35; color: #cdcdcd; font-weight: 700; padding-left: 5px; }
.selected .hd { background: #c3c3c3; font-weight: 700; position: relative; }
td.clip { overflow: hidden; padding-right: 0; }
.b { font-weight: 700; }
.n { text-align: right; }
.in, .pc { background: #cfcbaa; color: #26299c; }
.in { border-left: 1px solid #777; border-right: 1px solid #777; }
.in.top { box-shadow: inset 0 1px #777; }
.in.bot { box-shadow: inset 0 -1px #777; }
.pc { text-align: right; padding-right: 9px; border-top: 1px solid #777; }
.pc.first { border-left: 1px solid #777; }
.rest { border-top: 1px solid #777; border-right: 1px solid #777; }
.marquee { position: absolute; left: 31px; top: 28px; width: 1760px; height: 1037px; border: 2px solid #3f7350; box-shadow: inset 0 0 0 1px #e8efe9; }
.marquee::after { content: ""; position: absolute; right: -5px; bottom: -5px; width: 8px; height: 8px; background: #2c6440; border: 1px solid #fff; }
.player { position: absolute; left: 965px; top: 1016px; width: 912px; height: 147px; border-radius: 22px; background: rgba(60, 60, 60, .025); padding: 20px 0 0 220px; }
.pctl { display: flex; align-items: center; fill: #fff; opacity: .14; }
.rw { margin: 0 26px 0 111px; }
.pctl .rw ~ svg:nth-child(4) { margin-left: 27px; }
.cast { margin: 0 43px 0 125px; }
.pip, .cast { fill: none; }
.scrub { position: absolute; left: 226px; top: 98px; width: 5px; height: 30px; border-radius: 3px; background: #fff; }

/* sheet tabs */
.sheets { height: 40px; flex: none; display: flex; align-items: stretch; background: #383838; border-top: 2px solid #9a9a9a; border-bottom: 2px solid #242424; font-size: 17px; font-weight: 600; font-variant-ligatures: no-contextual; }
.nav { width: 90px; display: flex; align-items: center; padding-left: 20px; gap: 22px; fill: #757575; }
.st { border: solid #1c1c1c; border-width: 3px 4px 4px; }
.green { width: 170px; background: #35722f; color: #fff; }
.st.cur { width: 124px; background: #fff; border: 0; margin: -2px 0 3px; color: #4a8a5c; }
.yr { width: 116px; background: #e0f3d8; color: #161616; }
.blue { width: 184px; background: #33658f; color: #fff; }
.add { width: 56px; border-right: 1px solid #666; margin-bottom: 6px; }

/* side panel */
.panel { min-width: 0; min-height: 0; display: flex; flex-direction: column; background: #fefefe; border-left: 1px solid #222; color: #4c4c4c; font-size: 20px; }
.panel h2 { height: 39px; flex: none; display: flex; align-items: center; justify-content: space-between; padding: 0 22px 0 24px; background: #383838; color: #dedede; font-size: 20px; font-weight: 600; }
.ptabs { height: 47px; flex: none; display: flex; align-items: center; padding: 0 8px 0 11px; border-bottom: 1px solid #dfe2e1; color: #8b8e8d; }
.ptabs svg + svg { margin-left: 19px; }
.ptabs .plogo { color: #111; margin-right: 2px; }
.ptabs a { height: 47px; line-height: 46px; padding: 0 12px; color: #b3b5b4; }
.ptabs .on { color: #111; margin-left: 8px; font-weight: 500; border-bottom: 2px solid #5b9b72; }
.info { margin: 8px 0 0 auto; width: 39px; height: 39px; border-radius: 6px; background: #7f7f7f; color: #eee; font: bold 26px "Liberation Serif", serif; }
.phead { height: 54px; flex: none; display: flex; align-items: center; padding: 0 27px 0 24px; color: #8b8e8d; }
.phead strong { flex: 1; font-weight: 500; color: #4a4a4a; font-size: 20px; }
.phead label { display: flex; align-items: center; gap: 12px; font-size: 18px; }
.phead button { margin-left: 25px; }
.ask { position: relative; z-index: 1; flex: none; height: 125px; margin: 0 12px; padding: 14px 42px 0 18px; background: #fbfbfb; border: 1px solid #e2e4e3; border-radius: 14px; box-shadow: 0 2px 3px rgba(0, 0, 0, .08); line-height: 31px; font-size: 20px; }
.ask p { background: linear-gradient(#4c4c4c 64%, #a5a5a5 74%, #d2d2d2 100%); background-clip: text; color: transparent; }
.chat { flex: 1; min-height: 0; position: relative; padding: 0 39px 0 29px; margin-top: -13px; }
.meta { font-size: 18px; line-height: 34px; color: #b3b5b4; }
.msg { line-height: 31px; margin: 10px 0; }
.msg + .meta { margin-top: 8px; }
.cut { display: flex; align-items: center; gap: 24px; margin: 17px -10px 17px 0; line-height: 34px; font-size: 19px; font-style: italic; color: #858786; }
.cut::before, .cut::after { content: ""; flex: 1; height: 1px; background: #dcdfde; }
.gen { margin: 5px 0; }
.gen span, .faint { color: #d9dbda; }
.thumb { position: absolute; right: 1px; top: 568px; width: 10px; height: 208px; border-radius: 5px; background: #e9ebea; }
.todo { flex: none; margin: 0 23px 0 24px; height: 78px; padding: 4px 7px 0 25px; border: 1px solid #e2e4e3; border-bottom: 0; border-radius: 14px 14px 0 0; color: #7c7f7e; font-size: 19px; }
.todo > div { display: flex; align-items: center; height: 35px; gap: 8px; }
.arrowr { width: 9px; height: 15px; fill: none; stroke: #9a9d9c; stroke-width: 2; }
.todo b { color: #4c4c4c; font-weight: 600; }
.todo kbd { color: #a8abaa; }
.todo span { font-size: 18px; }
.todo > div > kbd { font-size: 18px; }
.todo button { margin-left: auto; height: 30px; padding: 0 10px; gap: 9px; border: 1px solid #e6e8e7; border-radius: 8px; color: #d0d3d2; font-size: 18px; }
.todo button kbd { color: #d0d3d2; }
.composer { flex: none; margin: 0 12px 14px; height: 159px; display: flex; flex-direction: column; padding: 9px 9px 8px; border: 1px solid #b3b5b4; border-radius: 15px; background: #fff; }
.chips { display: flex; gap: 12px; }
.chip { height: 34px; display: flex; align-items: center; gap: 8px; padding: 0 7px; border: 1px solid #e4e6e5; border-radius: 8px; color: #a3a6a5; font-size: 18px; }
.chip em { font-style: normal; font-weight: 600; color: #5b9b72; background: #eff2f1; border-radius: 10px; padding: 3px 6px; }
.composer textarea { flex: 1; min-height: 0; resize: none; padding: 10px 7px 0; font-size: 20px; line-height: 24px; overflow: hidden; }
.composer textarea::placeholder { color: #d3d5d4; opacity: 1; }
.actions { display: flex; align-items: center; height: 36px; padding-left: 6px; gap: 13px; color: #858786; font-size: 18px; }
.control { height: 29px; width: 167px; gap: 7px; border-radius: 10px; background: #f2f4f3; color: #3c5488; }
.control kbd { color: #c4c7c6; }
.control .chev { color: #777; }
.model { gap: 7px; margin-left: 8px; }
.model .chev { margin-left: 6px; }
.stop { margin-left: auto; width: 107px; height: 37px; gap: 8px; border-radius: 10px; background: #38603f; color: #f0f4f1; font-size: 20px; }
.stop i { width: 20px; height: 20px; border: 2px solid #f0f4f1; border-radius: 3px; }

/* status bar */
.status { height: 32px; flex: none; display: flex; align-items: center; padding-left: 35px; background: linear-gradient(#545454, #444); font-size: 17px; color: #dadada; white-space: nowrap; }
.status > .i24 { margin: 0 7px 0 28px; }
.acc { margin-right: auto; }
.stats { display: flex; gap: 30px; margin-right: 15px; font-size: 18px; }
.view { width: 53px; height: 32px; }
.view.on { background: #6c6c6c; }
.zoom { display: flex; align-items: center; gap: 10px; margin: 0 24px 0 10px; }
.zoom input { appearance: none; width: 147px; height: 24px; background: linear-gradient(#808080, #808080) center / 100% 5px no-repeat; }
.zoom input::-webkit-slider-thumb { appearance: none; width: 24px; height: 24px; border-radius: 50%; background: #b3b3b3; }
.pct { width: 82px; }
```
